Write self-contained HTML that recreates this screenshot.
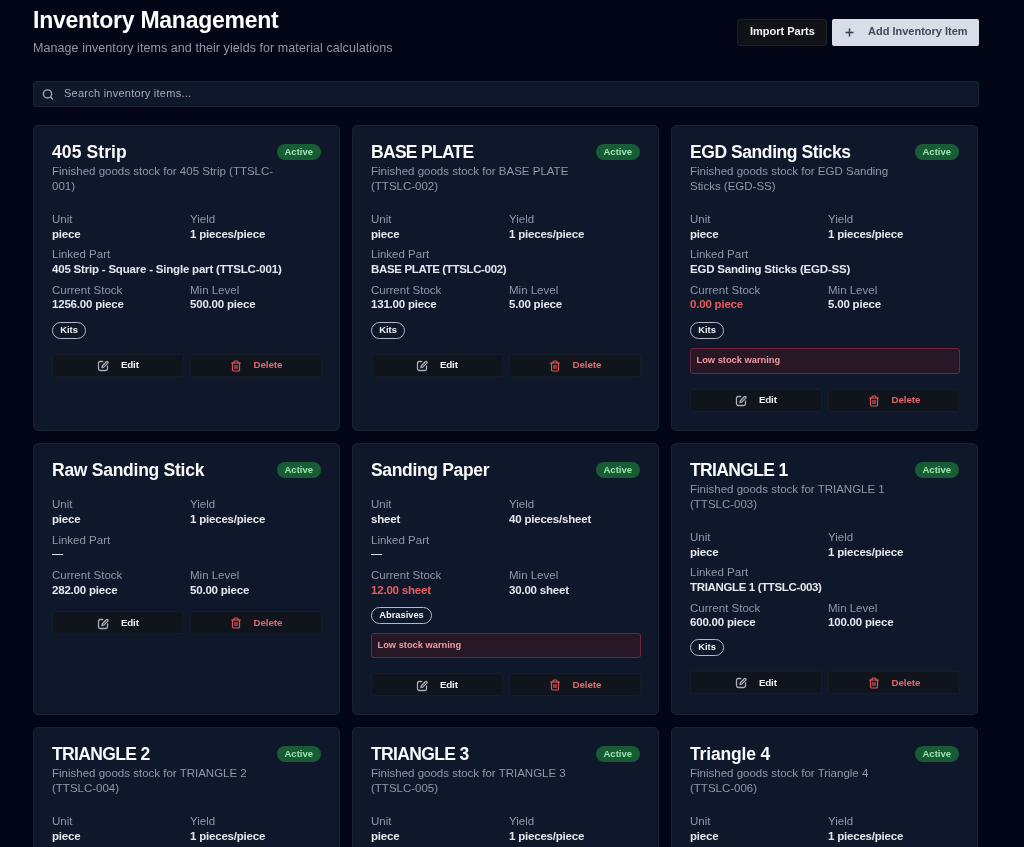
<!DOCTYPE html><html><head><meta charset="utf-8"><style>
*{box-sizing:border-box;margin:0;padding:0}
html,body{width:1024px;height:847px;overflow:hidden;background:#020617;font-family:"Liberation Sans",sans-serif;-webkit-font-smoothing:antialiased}
.t{position:absolute;white-space:nowrap}
.card{position:absolute;width:307px;background:#0f172a;border:1px solid #1a2232;border-radius:5px;overflow:hidden}
.ttl{font-weight:700;color:#f9fafb}
.dsc{color:#8f98a8}
.lbl{color:#8f98a8}
.val{font-weight:700;color:#e5e7eb}
.red{color:#ec5b5e}
.badge{position:absolute;height:16px;border-radius:8px;background:#175c35}
.tag{position:absolute;border:1.4px solid #b4b9c3;border-radius:9px}
.warn{position:absolute;background:#281826;border:1px solid #74243a;border-radius:3px}
.act{position:absolute;background:#10141c;border:1px solid #191c25;border-radius:3px}
</style></head><body><div style="position:absolute;left:0;top:0;width:1024px;height:847px;will-change:transform">
<div class="t ttl" style="left:33.00px;top:9.03px;font-size:23px;line-height:23px;letter-spacing:-0.25px;color:#ffffff">Inventory Management</div>
<div class="t dsc" style="left:33.00px;top:41.92px;font-size:12.5px;line-height:12.5px;letter-spacing:0.07px">Manage inventory items and their yields for material calculations</div>
<div style="position:absolute;left:737px;top:18.5px;width:90px;height:27px;background:#111217;border:1px solid #1c1f27;border-radius:3px"></div>
<div class="t " style="left:750.00px;top:26.19px;font-size:11px;line-height:11px;color:#f3f4f6;font-weight:700">Import Parts</div>
<div style="position:absolute;left:832px;top:18.5px;width:147px;height:27px;background:#d9dde7;border-radius:2px"></div>
<svg style="position:absolute;left:845px;top:27.5px" width="9" height="9" viewBox="0 0 9 9"><path d="M4.5 0.5v8M0.5 4.5h8" stroke="#3a3f4b" stroke-width="1.5"/></svg>
<div class="t " style="left:868.00px;top:26.19px;font-size:11px;line-height:11px;color:#434855;font-weight:700">Add Inventory Item</div>
<div style="position:absolute;left:33px;top:81px;width:946px;height:26px;background:#0f172a;border:1px solid #1b2332;border-radius:3px"></div>
<svg style="position:absolute;left:42px;top:88px" width="12" height="12" viewBox="0 0 12 12"><circle cx="5.5" cy="5.9" r="4.1" fill="none" stroke="#a3aab6" stroke-width="1.35"/><line x1="8.6" y1="9" x2="10.6" y2="11" stroke="#a3aab6" stroke-width="1.35" stroke-linecap="round"/></svg>
<div class="t " style="left:64.00px;top:87.89px;font-size:11px;line-height:11px;letter-spacing:0.25px;color:#a3aab6">Search inventory items...</div>
<div class="card" style="left:33px;top:125px;height:306px"></div>
<div class="t ttl" style="left:52.00px;top:143.69px;font-size:17.5px;line-height:17.5px;letter-spacing:0.1px">405 Strip</div>
<div class="badge" style="left:277px;top:144px;width:44px"></div>
<div class="t " style="left:284.50px;top:147.16px;font-size:9.5px;line-height:9.5px;color:#9be3b0;font-weight:700">Active</div>
<div class="t dsc" style="left:52.00px;top:165.77px;font-size:11.5px;line-height:11.5px">Finished goods stock for 405 Strip (TTSLC-</div>
<div class="t dsc" style="left:52.00px;top:180.97px;font-size:11.5px;line-height:11.5px">001)</div>
<div class="t lbl" style="left:52.00px;top:213.77px;font-size:11.5px;line-height:11.5px">Unit</div>
<div class="t lbl" style="left:190.00px;top:213.77px;font-size:11.5px;line-height:11.5px">Yield</div>
<div class="t val" style="left:52.00px;top:228.77px;font-size:11.5px;line-height:11.5px;letter-spacing:-0.2px">piece</div>
<div class="t val" style="left:190.00px;top:228.77px;font-size:11.5px;line-height:11.5px;letter-spacing:-0.2px">1 pieces/piece</div>
<div class="t lbl" style="left:52.00px;top:249.27px;font-size:11.5px;line-height:11.5px">Linked Part</div>
<div class="t val" style="left:52.00px;top:263.77px;font-size:11.5px;line-height:11.5px;letter-spacing:-0.2px">405 Strip - Square - Single part (TTSLC-001)</div>
<div class="t lbl" style="left:52.00px;top:284.77px;font-size:11.5px;line-height:11.5px">Current Stock</div>
<div class="t lbl" style="left:190.00px;top:284.77px;font-size:11.5px;line-height:11.5px">Min Level</div>
<div class="t val" style="left:52.00px;top:299.27px;font-size:11.5px;line-height:11.5px;letter-spacing:-0.2px">1256.00 piece</div>
<div class="t val" style="left:190.00px;top:299.27px;font-size:11.5px;line-height:11.5px;letter-spacing:-0.2px">500.00 piece</div>
<div class="tag" style="left:52px;top:322.0px;width:34px;height:17px"></div>
<div class="t " style="left:60.30px;top:325.83px;font-size:9.3px;line-height:9.3px;color:#f3f4f6;font-weight:700">Kits</div>
<div class="act" style="left:52px;top:353.5px;width:132px;height:23px"></div>
<div class="act" style="left:190px;top:353.5px;width:132px;height:23px"></div>
<div style="position:absolute;left:97px;top:360.0px;line-height:0"><svg width="12" height="12" viewBox="0 0 24 24" fill="none" stroke="#a9aeb8" stroke-width="2.6" stroke-linecap="round" stroke-linejoin="round"><path d="M11.5 3H6.5a3.5 3.5 0 0 0-3.5 3.5v11a3.5 3.5 0 0 0 3.5 3.5h11a3.5 3.5 0 0 0 3.5-3.5v-5.5"/><path d="M18.6 3.4a2 2 0 1 1 2.9 2.9L13.5 14.2l-3.7 1 1-3.7Z"/></svg></div>
<div class="t " style="left:121.00px;top:360.40px;font-size:9.8px;line-height:9.8px;letter-spacing:-0.2px;color:#f3f4f6;font-weight:700">Edit</div>
<div style="position:absolute;left:229.5px;top:359.5px;line-height:0"><svg width="12" height="12" viewBox="0 0 24 24" fill="none" stroke="#e0555a" stroke-width="2.4" stroke-linecap="round" stroke-linejoin="round"><path d="M3 6h18"/><path d="M19 6v14c0 1-1 2-2 2H7c-1 0-2-1-2-2V6"/><path d="M8 6V4c0-1 1-2 2-2h4c1 0 2 1 2 2v2"/><line x1="10" x2="10" y1="11" y2="17"/><line x1="14" x2="14" y1="11" y2="17"/></svg></div>
<div class="t " style="left:253.50px;top:360.40px;font-size:9.8px;line-height:9.8px;letter-spacing:-0.1px;color:#e4666c;font-weight:700">Delete</div>
<div class="card" style="left:352px;top:125px;height:306px"></div>
<div class="t ttl" style="left:371.00px;top:143.69px;font-size:17.5px;line-height:17.5px;letter-spacing:-0.7px">BASE PLATE</div>
<div class="badge" style="left:596px;top:144px;width:44px"></div>
<div class="t " style="left:603.50px;top:147.16px;font-size:9.5px;line-height:9.5px;color:#9be3b0;font-weight:700">Active</div>
<div class="t dsc" style="left:371.00px;top:165.77px;font-size:11.5px;line-height:11.5px">Finished goods stock for BASE PLATE</div>
<div class="t dsc" style="left:371.00px;top:180.97px;font-size:11.5px;line-height:11.5px">(TTSLC-002)</div>
<div class="t lbl" style="left:371.00px;top:213.77px;font-size:11.5px;line-height:11.5px">Unit</div>
<div class="t lbl" style="left:509.00px;top:213.77px;font-size:11.5px;line-height:11.5px">Yield</div>
<div class="t val" style="left:371.00px;top:228.77px;font-size:11.5px;line-height:11.5px;letter-spacing:-0.2px">piece</div>
<div class="t val" style="left:509.00px;top:228.77px;font-size:11.5px;line-height:11.5px;letter-spacing:-0.2px">1 pieces/piece</div>
<div class="t lbl" style="left:371.00px;top:249.27px;font-size:11.5px;line-height:11.5px">Linked Part</div>
<div class="t val" style="left:371.00px;top:263.77px;font-size:11.5px;line-height:11.5px;letter-spacing:-0.35px">BASE PLATE (TTSLC-002)</div>
<div class="t lbl" style="left:371.00px;top:284.77px;font-size:11.5px;line-height:11.5px">Current Stock</div>
<div class="t lbl" style="left:509.00px;top:284.77px;font-size:11.5px;line-height:11.5px">Min Level</div>
<div class="t val" style="left:371.00px;top:299.27px;font-size:11.5px;line-height:11.5px;letter-spacing:-0.2px">131.00 piece</div>
<div class="t val" style="left:509.00px;top:299.27px;font-size:11.5px;line-height:11.5px;letter-spacing:-0.2px">5.00 piece</div>
<div class="tag" style="left:371px;top:322.0px;width:34px;height:17px"></div>
<div class="t " style="left:379.30px;top:325.83px;font-size:9.3px;line-height:9.3px;color:#f3f4f6;font-weight:700">Kits</div>
<div class="act" style="left:371px;top:353.5px;width:132px;height:23px"></div>
<div class="act" style="left:509px;top:353.5px;width:132px;height:23px"></div>
<div style="position:absolute;left:416px;top:360.0px;line-height:0"><svg width="12" height="12" viewBox="0 0 24 24" fill="none" stroke="#a9aeb8" stroke-width="2.6" stroke-linecap="round" stroke-linejoin="round"><path d="M11.5 3H6.5a3.5 3.5 0 0 0-3.5 3.5v11a3.5 3.5 0 0 0 3.5 3.5h11a3.5 3.5 0 0 0 3.5-3.5v-5.5"/><path d="M18.6 3.4a2 2 0 1 1 2.9 2.9L13.5 14.2l-3.7 1 1-3.7Z"/></svg></div>
<div class="t " style="left:440.00px;top:360.40px;font-size:9.8px;line-height:9.8px;letter-spacing:-0.2px;color:#f3f4f6;font-weight:700">Edit</div>
<div style="position:absolute;left:548.5px;top:359.5px;line-height:0"><svg width="12" height="12" viewBox="0 0 24 24" fill="none" stroke="#e0555a" stroke-width="2.4" stroke-linecap="round" stroke-linejoin="round"><path d="M3 6h18"/><path d="M19 6v14c0 1-1 2-2 2H7c-1 0-2-1-2-2V6"/><path d="M8 6V4c0-1 1-2 2-2h4c1 0 2 1 2 2v2"/><line x1="10" x2="10" y1="11" y2="17"/><line x1="14" x2="14" y1="11" y2="17"/></svg></div>
<div class="t " style="left:572.50px;top:360.40px;font-size:9.8px;line-height:9.8px;letter-spacing:-0.1px;color:#e4666c;font-weight:700">Delete</div>
<div class="card" style="left:671px;top:125px;height:306px"></div>
<div class="t ttl" style="left:690.00px;top:143.69px;font-size:17.5px;line-height:17.5px;letter-spacing:-0.43px">EGD Sanding Sticks</div>
<div class="badge" style="left:915px;top:144px;width:44px"></div>
<div class="t " style="left:922.50px;top:147.16px;font-size:9.5px;line-height:9.5px;color:#9be3b0;font-weight:700">Active</div>
<div class="t dsc" style="left:690.00px;top:165.77px;font-size:11.5px;line-height:11.5px">Finished goods stock for EGD Sanding</div>
<div class="t dsc" style="left:690.00px;top:180.97px;font-size:11.5px;line-height:11.5px">Sticks (EGD-SS)</div>
<div class="t lbl" style="left:690.00px;top:213.77px;font-size:11.5px;line-height:11.5px">Unit</div>
<div class="t lbl" style="left:828.00px;top:213.77px;font-size:11.5px;line-height:11.5px">Yield</div>
<div class="t val" style="left:690.00px;top:228.77px;font-size:11.5px;line-height:11.5px;letter-spacing:-0.2px">piece</div>
<div class="t val" style="left:828.00px;top:228.77px;font-size:11.5px;line-height:11.5px;letter-spacing:-0.2px">1 pieces/piece</div>
<div class="t lbl" style="left:690.00px;top:249.27px;font-size:11.5px;line-height:11.5px">Linked Part</div>
<div class="t val" style="left:690.00px;top:263.77px;font-size:11.5px;line-height:11.5px;letter-spacing:-0.2px">EGD Sanding Sticks (EGD-SS)</div>
<div class="t lbl" style="left:690.00px;top:284.77px;font-size:11.5px;line-height:11.5px">Current Stock</div>
<div class="t lbl" style="left:828.00px;top:284.77px;font-size:11.5px;line-height:11.5px">Min Level</div>
<div class="t val red" style="left:690.00px;top:299.27px;font-size:11.5px;line-height:11.5px;letter-spacing:-0.2px">0.00 piece</div>
<div class="t val" style="left:828.00px;top:299.27px;font-size:11.5px;line-height:11.5px;letter-spacing:-0.2px">5.00 piece</div>
<div class="tag" style="left:690px;top:322.0px;width:34px;height:17px"></div>
<div class="t " style="left:698.30px;top:325.83px;font-size:9.3px;line-height:9.3px;color:#f3f4f6;font-weight:700">Kits</div>
<div class="warn" style="left:690px;top:348.0px;width:270px;height:25.5px"></div>
<div class="t " style="left:696.50px;top:356.13px;font-size:9.3px;line-height:9.3px;color:#f29aa0;font-weight:700">Low stock warning</div>
<div class="act" style="left:690px;top:388.5px;width:132px;height:23px"></div>
<div class="act" style="left:828px;top:388.5px;width:132px;height:23px"></div>
<div style="position:absolute;left:735px;top:395.0px;line-height:0"><svg width="12" height="12" viewBox="0 0 24 24" fill="none" stroke="#a9aeb8" stroke-width="2.6" stroke-linecap="round" stroke-linejoin="round"><path d="M11.5 3H6.5a3.5 3.5 0 0 0-3.5 3.5v11a3.5 3.5 0 0 0 3.5 3.5h11a3.5 3.5 0 0 0 3.5-3.5v-5.5"/><path d="M18.6 3.4a2 2 0 1 1 2.9 2.9L13.5 14.2l-3.7 1 1-3.7Z"/></svg></div>
<div class="t " style="left:759.00px;top:395.40px;font-size:9.8px;line-height:9.8px;letter-spacing:-0.2px;color:#f3f4f6;font-weight:700">Edit</div>
<div style="position:absolute;left:867.5px;top:394.5px;line-height:0"><svg width="12" height="12" viewBox="0 0 24 24" fill="none" stroke="#e0555a" stroke-width="2.4" stroke-linecap="round" stroke-linejoin="round"><path d="M3 6h18"/><path d="M19 6v14c0 1-1 2-2 2H7c-1 0-2-1-2-2V6"/><path d="M8 6V4c0-1 1-2 2-2h4c1 0 2 1 2 2v2"/><line x1="10" x2="10" y1="11" y2="17"/><line x1="14" x2="14" y1="11" y2="17"/></svg></div>
<div class="t " style="left:891.50px;top:395.40px;font-size:9.8px;line-height:9.8px;letter-spacing:-0.1px;color:#e4666c;font-weight:700">Delete</div>
<div class="card" style="left:33px;top:443px;height:272px"></div>
<div class="t ttl" style="left:52.00px;top:461.69px;font-size:17.5px;line-height:17.5px;letter-spacing:-0.26px">Raw Sanding Stick</div>
<div class="badge" style="left:277px;top:462px;width:44px"></div>
<div class="t " style="left:284.50px;top:465.16px;font-size:9.5px;line-height:9.5px;color:#9be3b0;font-weight:700">Active</div>
<div class="t lbl" style="left:52.00px;top:499.47px;font-size:11.5px;line-height:11.5px">Unit</div>
<div class="t lbl" style="left:190.00px;top:499.47px;font-size:11.5px;line-height:11.5px">Yield</div>
<div class="t val" style="left:52.00px;top:514.47px;font-size:11.5px;line-height:11.5px;letter-spacing:-0.2px">piece</div>
<div class="t val" style="left:190.00px;top:514.47px;font-size:11.5px;line-height:11.5px;letter-spacing:-0.2px">1 pieces/piece</div>
<div class="t lbl" style="left:52.00px;top:534.97px;font-size:11.5px;line-height:11.5px">Linked Part</div>
<div style="position:absolute;left:52px;top:554.3px;width:11px;height:1.2px;background:#dfe2e8"></div>
<div class="t lbl" style="left:52.00px;top:570.47px;font-size:11.5px;line-height:11.5px">Current Stock</div>
<div class="t lbl" style="left:190.00px;top:570.47px;font-size:11.5px;line-height:11.5px">Min Level</div>
<div class="t val" style="left:52.00px;top:584.97px;font-size:11.5px;line-height:11.5px;letter-spacing:-0.2px">282.00 piece</div>
<div class="t val" style="left:190.00px;top:584.97px;font-size:11.5px;line-height:11.5px;letter-spacing:-0.2px">50.00 piece</div>
<div class="act" style="left:52px;top:611.2px;width:132px;height:23px"></div>
<div class="act" style="left:190px;top:611.2px;width:132px;height:23px"></div>
<div style="position:absolute;left:97px;top:617.7px;line-height:0"><svg width="12" height="12" viewBox="0 0 24 24" fill="none" stroke="#a9aeb8" stroke-width="2.6" stroke-linecap="round" stroke-linejoin="round"><path d="M11.5 3H6.5a3.5 3.5 0 0 0-3.5 3.5v11a3.5 3.5 0 0 0 3.5 3.5h11a3.5 3.5 0 0 0 3.5-3.5v-5.5"/><path d="M18.6 3.4a2 2 0 1 1 2.9 2.9L13.5 14.2l-3.7 1 1-3.7Z"/></svg></div>
<div class="t " style="left:121.00px;top:618.10px;font-size:9.8px;line-height:9.8px;letter-spacing:-0.2px;color:#f3f4f6;font-weight:700">Edit</div>
<div style="position:absolute;left:229.5px;top:617.2px;line-height:0"><svg width="12" height="12" viewBox="0 0 24 24" fill="none" stroke="#e0555a" stroke-width="2.4" stroke-linecap="round" stroke-linejoin="round"><path d="M3 6h18"/><path d="M19 6v14c0 1-1 2-2 2H7c-1 0-2-1-2-2V6"/><path d="M8 6V4c0-1 1-2 2-2h4c1 0 2 1 2 2v2"/><line x1="10" x2="10" y1="11" y2="17"/><line x1="14" x2="14" y1="11" y2="17"/></svg></div>
<div class="t " style="left:253.50px;top:618.10px;font-size:9.8px;line-height:9.8px;letter-spacing:-0.1px;color:#e4666c;font-weight:700">Delete</div>
<div class="card" style="left:352px;top:443px;height:272px"></div>
<div class="t ttl" style="left:371.00px;top:461.69px;font-size:17.5px;line-height:17.5px;letter-spacing:-0.33px">Sanding Paper</div>
<div class="badge" style="left:596px;top:462px;width:44px"></div>
<div class="t " style="left:603.50px;top:465.16px;font-size:9.5px;line-height:9.5px;color:#9be3b0;font-weight:700">Active</div>
<div class="t lbl" style="left:371.00px;top:499.47px;font-size:11.5px;line-height:11.5px">Unit</div>
<div class="t lbl" style="left:509.00px;top:499.47px;font-size:11.5px;line-height:11.5px">Yield</div>
<div class="t val" style="left:371.00px;top:514.47px;font-size:11.5px;line-height:11.5px;letter-spacing:-0.2px">sheet</div>
<div class="t val" style="left:509.00px;top:514.47px;font-size:11.5px;line-height:11.5px;letter-spacing:-0.2px">40 pieces/sheet</div>
<div class="t lbl" style="left:371.00px;top:534.97px;font-size:11.5px;line-height:11.5px">Linked Part</div>
<div style="position:absolute;left:371px;top:554.3px;width:11px;height:1.2px;background:#dfe2e8"></div>
<div class="t lbl" style="left:371.00px;top:570.47px;font-size:11.5px;line-height:11.5px">Current Stock</div>
<div class="t lbl" style="left:509.00px;top:570.47px;font-size:11.5px;line-height:11.5px">Min Level</div>
<div class="t val red" style="left:371.00px;top:584.97px;font-size:11.5px;line-height:11.5px;letter-spacing:-0.2px">12.00 sheet</div>
<div class="t val" style="left:509.00px;top:584.97px;font-size:11.5px;line-height:11.5px;letter-spacing:-0.2px">30.00 sheet</div>
<div class="tag" style="left:371px;top:606.8px;width:61px;height:17px"></div>
<div class="t " style="left:379.30px;top:610.63px;font-size:9.3px;line-height:9.3px;color:#f3f4f6;font-weight:700">Abrasives</div>
<div class="warn" style="left:371px;top:632.8px;width:270px;height:25.5px"></div>
<div class="t " style="left:377.50px;top:640.93px;font-size:9.3px;line-height:9.3px;color:#f29aa0;font-weight:700">Low stock warning</div>
<div class="act" style="left:371px;top:673.3px;width:132px;height:23px"></div>
<div class="act" style="left:509px;top:673.3px;width:132px;height:23px"></div>
<div style="position:absolute;left:416px;top:679.8px;line-height:0"><svg width="12" height="12" viewBox="0 0 24 24" fill="none" stroke="#a9aeb8" stroke-width="2.6" stroke-linecap="round" stroke-linejoin="round"><path d="M11.5 3H6.5a3.5 3.5 0 0 0-3.5 3.5v11a3.5 3.5 0 0 0 3.5 3.5h11a3.5 3.5 0 0 0 3.5-3.5v-5.5"/><path d="M18.6 3.4a2 2 0 1 1 2.9 2.9L13.5 14.2l-3.7 1 1-3.7Z"/></svg></div>
<div class="t " style="left:440.00px;top:680.20px;font-size:9.8px;line-height:9.8px;letter-spacing:-0.2px;color:#f3f4f6;font-weight:700">Edit</div>
<div style="position:absolute;left:548.5px;top:679.3px;line-height:0"><svg width="12" height="12" viewBox="0 0 24 24" fill="none" stroke="#e0555a" stroke-width="2.4" stroke-linecap="round" stroke-linejoin="round"><path d="M3 6h18"/><path d="M19 6v14c0 1-1 2-2 2H7c-1 0-2-1-2-2V6"/><path d="M8 6V4c0-1 1-2 2-2h4c1 0 2 1 2 2v2"/><line x1="10" x2="10" y1="11" y2="17"/><line x1="14" x2="14" y1="11" y2="17"/></svg></div>
<div class="t " style="left:572.50px;top:680.20px;font-size:9.8px;line-height:9.8px;letter-spacing:-0.1px;color:#e4666c;font-weight:700">Delete</div>
<div class="card" style="left:671px;top:443px;height:272px"></div>
<div class="t ttl" style="left:690.00px;top:461.69px;font-size:17.5px;line-height:17.5px;letter-spacing:-0.65px">TRIANGLE 1</div>
<div class="badge" style="left:915px;top:462px;width:44px"></div>
<div class="t " style="left:922.50px;top:465.16px;font-size:9.5px;line-height:9.5px;color:#9be3b0;font-weight:700">Active</div>
<div class="t dsc" style="left:690.00px;top:483.77px;font-size:11.5px;line-height:11.5px">Finished goods stock for TRIANGLE 1</div>
<div class="t dsc" style="left:690.00px;top:498.97px;font-size:11.5px;line-height:11.5px">(TTSLC-003)</div>
<div class="t lbl" style="left:690.00px;top:531.77px;font-size:11.5px;line-height:11.5px">Unit</div>
<div class="t lbl" style="left:828.00px;top:531.77px;font-size:11.5px;line-height:11.5px">Yield</div>
<div class="t val" style="left:690.00px;top:546.77px;font-size:11.5px;line-height:11.5px;letter-spacing:-0.2px">piece</div>
<div class="t val" style="left:828.00px;top:546.77px;font-size:11.5px;line-height:11.5px;letter-spacing:-0.2px">1 pieces/piece</div>
<div class="t lbl" style="left:690.00px;top:567.27px;font-size:11.5px;line-height:11.5px">Linked Part</div>
<div class="t val" style="left:690.00px;top:581.77px;font-size:11.5px;line-height:11.5px;letter-spacing:-0.35px">TRIANGLE 1 (TTSLC-003)</div>
<div class="t lbl" style="left:690.00px;top:602.77px;font-size:11.5px;line-height:11.5px">Current Stock</div>
<div class="t lbl" style="left:828.00px;top:602.77px;font-size:11.5px;line-height:11.5px">Min Level</div>
<div class="t val" style="left:690.00px;top:617.27px;font-size:11.5px;line-height:11.5px;letter-spacing:-0.2px">600.00 piece</div>
<div class="t val" style="left:828.00px;top:617.27px;font-size:11.5px;line-height:11.5px;letter-spacing:-0.2px">100.00 piece</div>
<div class="tag" style="left:690px;top:639.1px;width:34px;height:17px"></div>
<div class="t " style="left:698.30px;top:642.93px;font-size:9.3px;line-height:9.3px;color:#f3f4f6;font-weight:700">Kits</div>
<div class="act" style="left:690px;top:670.6px;width:132px;height:23px"></div>
<div class="act" style="left:828px;top:670.6px;width:132px;height:23px"></div>
<div style="position:absolute;left:735px;top:677.1px;line-height:0"><svg width="12" height="12" viewBox="0 0 24 24" fill="none" stroke="#a9aeb8" stroke-width="2.6" stroke-linecap="round" stroke-linejoin="round"><path d="M11.5 3H6.5a3.5 3.5 0 0 0-3.5 3.5v11a3.5 3.5 0 0 0 3.5 3.5h11a3.5 3.5 0 0 0 3.5-3.5v-5.5"/><path d="M18.6 3.4a2 2 0 1 1 2.9 2.9L13.5 14.2l-3.7 1 1-3.7Z"/></svg></div>
<div class="t " style="left:759.00px;top:677.50px;font-size:9.8px;line-height:9.8px;letter-spacing:-0.2px;color:#f3f4f6;font-weight:700">Edit</div>
<div style="position:absolute;left:867.5px;top:676.6px;line-height:0"><svg width="12" height="12" viewBox="0 0 24 24" fill="none" stroke="#e0555a" stroke-width="2.4" stroke-linecap="round" stroke-linejoin="round"><path d="M3 6h18"/><path d="M19 6v14c0 1-1 2-2 2H7c-1 0-2-1-2-2V6"/><path d="M8 6V4c0-1 1-2 2-2h4c1 0 2 1 2 2v2"/><line x1="10" x2="10" y1="11" y2="17"/><line x1="14" x2="14" y1="11" y2="17"/></svg></div>
<div class="t " style="left:891.50px;top:677.50px;font-size:9.8px;line-height:9.8px;letter-spacing:-0.1px;color:#e4666c;font-weight:700">Delete</div>
<div class="card" style="left:33px;top:727px;height:200px"></div>
<div class="t ttl" style="left:52.00px;top:745.69px;font-size:17.5px;line-height:17.5px;letter-spacing:-0.65px">TRIANGLE 2</div>
<div class="badge" style="left:277px;top:746px;width:44px"></div>
<div class="t " style="left:284.50px;top:749.16px;font-size:9.5px;line-height:9.5px;color:#9be3b0;font-weight:700">Active</div>
<div class="t dsc" style="left:52.00px;top:767.77px;font-size:11.5px;line-height:11.5px">Finished goods stock for TRIANGLE 2</div>
<div class="t dsc" style="left:52.00px;top:782.97px;font-size:11.5px;line-height:11.5px">(TTSLC-004)</div>
<div class="t lbl" style="left:52.00px;top:815.77px;font-size:11.5px;line-height:11.5px">Unit</div>
<div class="t lbl" style="left:190.00px;top:815.77px;font-size:11.5px;line-height:11.5px">Yield</div>
<div class="t val" style="left:52.00px;top:830.77px;font-size:11.5px;line-height:11.5px;letter-spacing:-0.2px">piece</div>
<div class="t val" style="left:190.00px;top:830.77px;font-size:11.5px;line-height:11.5px;letter-spacing:-0.2px">1 pieces/piece</div>
<div class="t lbl" style="left:52.00px;top:851.27px;font-size:11.5px;line-height:11.5px">Linked Part</div>
<div class="t val" style="left:52.00px;top:865.77px;font-size:11.5px;line-height:11.5px;letter-spacing:-0.35px">TRIANGLE 2 (TTSLC-004)</div>
<div class="card" style="left:352px;top:727px;height:200px"></div>
<div class="t ttl" style="left:371.00px;top:745.69px;font-size:17.5px;line-height:17.5px;letter-spacing:-0.65px">TRIANGLE 3</div>
<div class="badge" style="left:596px;top:746px;width:44px"></div>
<div class="t " style="left:603.50px;top:749.16px;font-size:9.5px;line-height:9.5px;color:#9be3b0;font-weight:700">Active</div>
<div class="t dsc" style="left:371.00px;top:767.77px;font-size:11.5px;line-height:11.5px">Finished goods stock for TRIANGLE 3</div>
<div class="t dsc" style="left:371.00px;top:782.97px;font-size:11.5px;line-height:11.5px">(TTSLC-005)</div>
<div class="t lbl" style="left:371.00px;top:815.77px;font-size:11.5px;line-height:11.5px">Unit</div>
<div class="t lbl" style="left:509.00px;top:815.77px;font-size:11.5px;line-height:11.5px">Yield</div>
<div class="t val" style="left:371.00px;top:830.77px;font-size:11.5px;line-height:11.5px;letter-spacing:-0.2px">piece</div>
<div class="t val" style="left:509.00px;top:830.77px;font-size:11.5px;line-height:11.5px;letter-spacing:-0.2px">1 pieces/piece</div>
<div class="t lbl" style="left:371.00px;top:851.27px;font-size:11.5px;line-height:11.5px">Linked Part</div>
<div class="t val" style="left:371.00px;top:865.77px;font-size:11.5px;line-height:11.5px;letter-spacing:-0.35px">TRIANGLE 3 (TTSLC-005)</div>
<div class="card" style="left:671px;top:727px;height:200px"></div>
<div class="t ttl" style="left:690.00px;top:745.69px;font-size:17.5px;line-height:17.5px;letter-spacing:-0.17px">Triangle 4</div>
<div class="badge" style="left:915px;top:746px;width:44px"></div>
<div class="t " style="left:922.50px;top:749.16px;font-size:9.5px;line-height:9.5px;color:#9be3b0;font-weight:700">Active</div>
<div class="t dsc" style="left:690.00px;top:767.77px;font-size:11.5px;line-height:11.5px">Finished goods stock for Triangle 4</div>
<div class="t dsc" style="left:690.00px;top:782.97px;font-size:11.5px;line-height:11.5px">(TTSLC-006)</div>
<div class="t lbl" style="left:690.00px;top:815.77px;font-size:11.5px;line-height:11.5px">Unit</div>
<div class="t lbl" style="left:828.00px;top:815.77px;font-size:11.5px;line-height:11.5px">Yield</div>
<div class="t val" style="left:690.00px;top:830.77px;font-size:11.5px;line-height:11.5px;letter-spacing:-0.2px">piece</div>
<div class="t val" style="left:828.00px;top:830.77px;font-size:11.5px;line-height:11.5px;letter-spacing:-0.2px">1 pieces/piece</div>
<div class="t lbl" style="left:690.00px;top:851.27px;font-size:11.5px;line-height:11.5px">Linked Part</div>
<div class="t val" style="left:690.00px;top:865.77px;font-size:11.5px;line-height:11.5px;letter-spacing:-0.2px">Triangle 4 (TTSLC-006)</div>
</div></body></html>
